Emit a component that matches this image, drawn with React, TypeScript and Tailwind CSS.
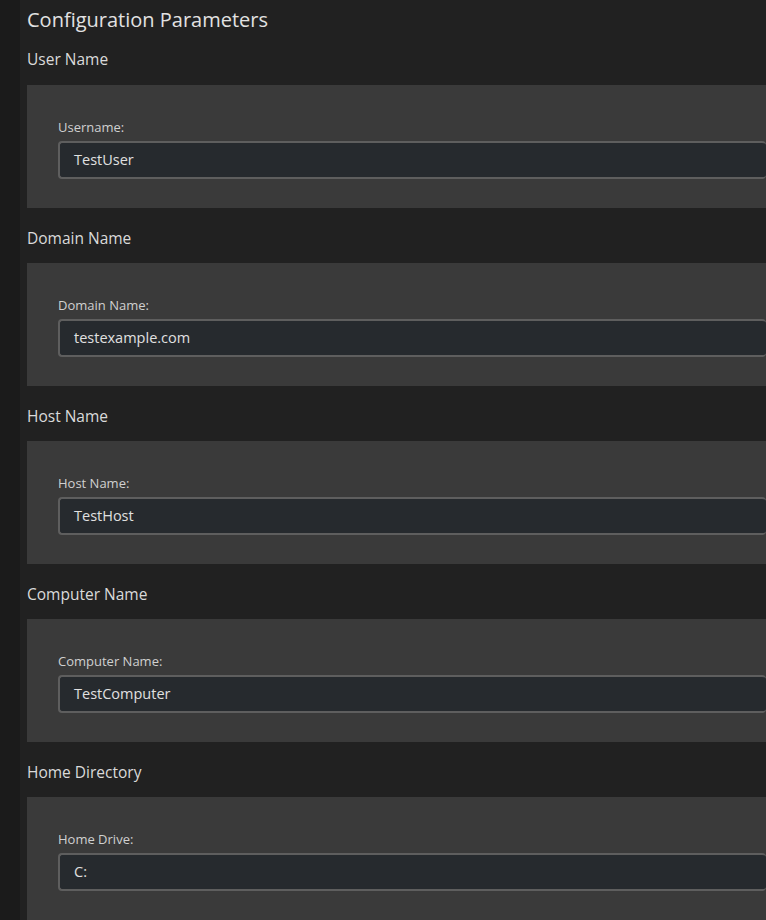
const sections = [
  { title: "User Name", label: "Username:", value: "TestUser" },
  { title: "Domain Name", label: "Domain Name:", value: "testexample.com" },
  { title: "Host Name", label: "Host Name:", value: "TestHost" },
  { title: "Computer Name", label: "Computer Name:", value: "TestComputer" },
  { title: "Home Directory", label: "Home Drive:", value: "C:" },
];

export default function App() {
  return (
    <div
      className="flex h-[920px] w-full overflow-hidden bg-[#212121]"
      style={{ fontFamily: '"Open Sans", "Noto Sans", sans-serif' }}
    >
      <div className="w-[20px] shrink-0 bg-[#1b1b1b]" />
      <main className="min-w-0 flex-1 pl-[7px]">
        <h1 className="pt-[8px] text-[20px] leading-[24px] text-[#e2e2e2]">
          Configuration Parameters
        </h1>
        {sections.map((s, i) => (
          <Section key={s.title} first={i === 0} {...s} />
        ))}
      </main>
    </div>
  );
}

function Section({
  title,
  label,
  value,
  first,
}: {
  title: string;
  label: string;
  value: string;
  first: boolean;
}) {
  return (
    <section>
      <h2
        className={`${first ? "pt-[17px] pb-[16px]" : "pt-[20px] pb-[15px]"} text-[15.5px] leading-[20px] text-[#dadada]`}
      >
        {title}
      </h2>
      <div className="h-[123px] bg-[#3a3a3a] pl-[31px] pt-[35px]">
        <label className="block text-[13px] leading-[14px] text-[#d0d0d0]">
          {label}
        </label>
        <div className="mt-[7px] flex h-[38px] items-center rounded-[4px] border-2 border-r-0 border-[#5e5e5e] bg-[#262a2e] px-[14px] text-[14.5px] text-[#e0e0e0]">
          {value}
        </div>
      </div>
    </section>
  );
}
